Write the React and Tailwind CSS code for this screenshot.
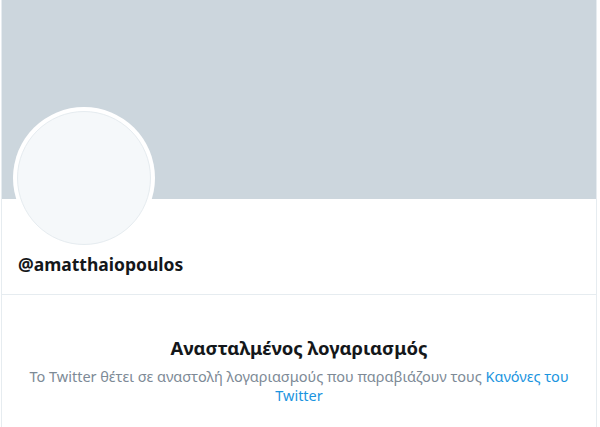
export default function App() {
  return (
    <div className="w-[600px] h-[427px] overflow-hidden bg-white" style={{ fontFamily: '"Noto Sans", "Open Sans", sans-serif' }}>
      <div className="ml-[1px] w-[596px] h-full border-l border-r border-[#e6ecf0] flex flex-col">
        <div className="h-[199px] bg-[#ccd6dd] shrink-0" />
        <div className="relative px-[16px]">
          <div className="absolute left-[11px] top-[-92px] w-[142px] h-[142px] rounded-full bg-white p-[4px]">
            <div className="w-full h-full rounded-full bg-[#f5f8fa] border border-[#e6ecf0]" />
          </div>
          <div className="pt-[52px] pb-[17px] text-[17.5px] font-bold text-[#14171a] leading-[26px]">@amatthaiopoulos</div>
        </div>
        <div className="border-t border-[#e6ecf0] flex flex-col items-center pt-[40px] px-[16px] text-center">
          <div className="text-[18.5px] font-bold text-[#14171a] leading-[26px]">Ανασταλμένος λογαριασμός</div>
          <p className="mt-[6px] text-[14.5px] leading-[19px] text-[#7d8a96]">
            Το Twitter θέτει σε αναστολή λογαριασμούς που παραβιάζουν τους <span className="text-[#1b95e0]">Κανόνες του Twitter</span>
          </p>
        </div>
      </div>
    </div>
  );
}
